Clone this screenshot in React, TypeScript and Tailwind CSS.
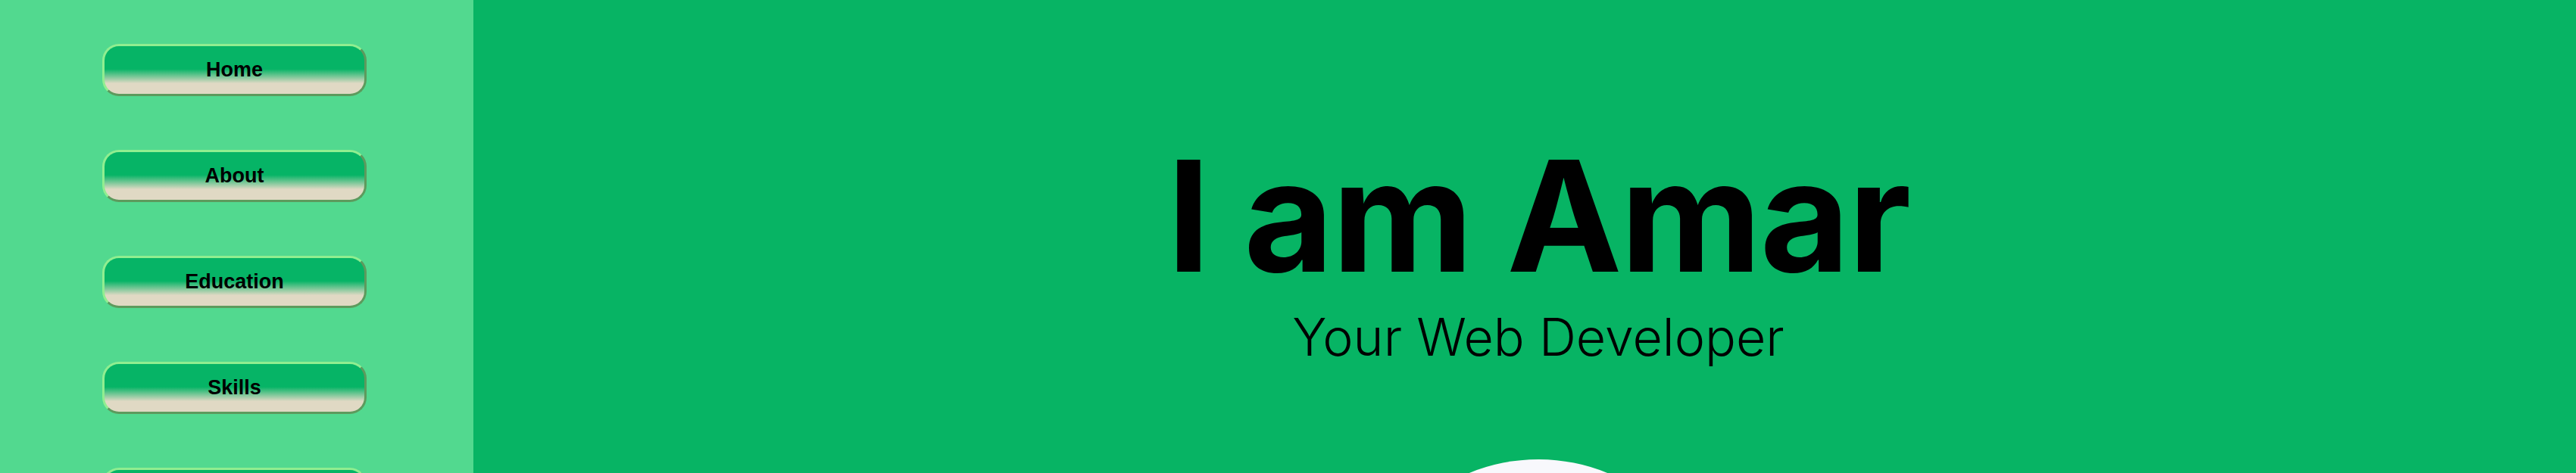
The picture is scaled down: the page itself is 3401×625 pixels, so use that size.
import React from 'react';

const navItems = ['Home', 'About', 'Education', 'Skills', 'Projects', 'Contact'];

const App: React.FC = () => {
  return (
    <div className="flex h-screen w-full overflow-hidden bg-[#07b464]">
      {/* Sidebar */}
      <aside className="w-[625px] shrink-0 bg-[#52d98f] pl-[135px] pt-[58px]">
        <nav className="flex flex-col gap-[71px]">
          {navItems.map((item) => (
            <a
              key={item}
              href={`#${item.toLowerCase()}`}
              className="flex h-[69px] w-[349px] shrink-0 items-center justify-center rounded-[22px] border-[3px] border-t-[#90ee90] border-l-[#90ee90] border-b-[#5d9a5d] border-r-[#5d9a5d] bg-[linear-gradient(to_bottom,#06b466_0%,#06b466_48%,#e0d9c4_78%,#e0d9c4_100%)] font-['Liberation_Sans',Arial,sans-serif] text-[27px] font-bold text-black"
            >
              {item}
            </a>
          ))}
        </nav>
      </aside>

      {/* Hero */}
      <main className="flex flex-1 flex-col items-center pl-[36px] pt-[183px] font-['Inter',sans-serif] text-black">
        <h1 className="text-[204px] font-bold leading-none tracking-[-2px]">I am Amar</h1>
        <p className="mt-[24px] text-[68px] font-light leading-none">Your Web Developer</p>
        <div className="mt-[128px] h-[480px] w-[480px] shrink-0 rounded-full bg-[#f8f8fc]" />
      </main>
    </div>
  );
};

export default App;
